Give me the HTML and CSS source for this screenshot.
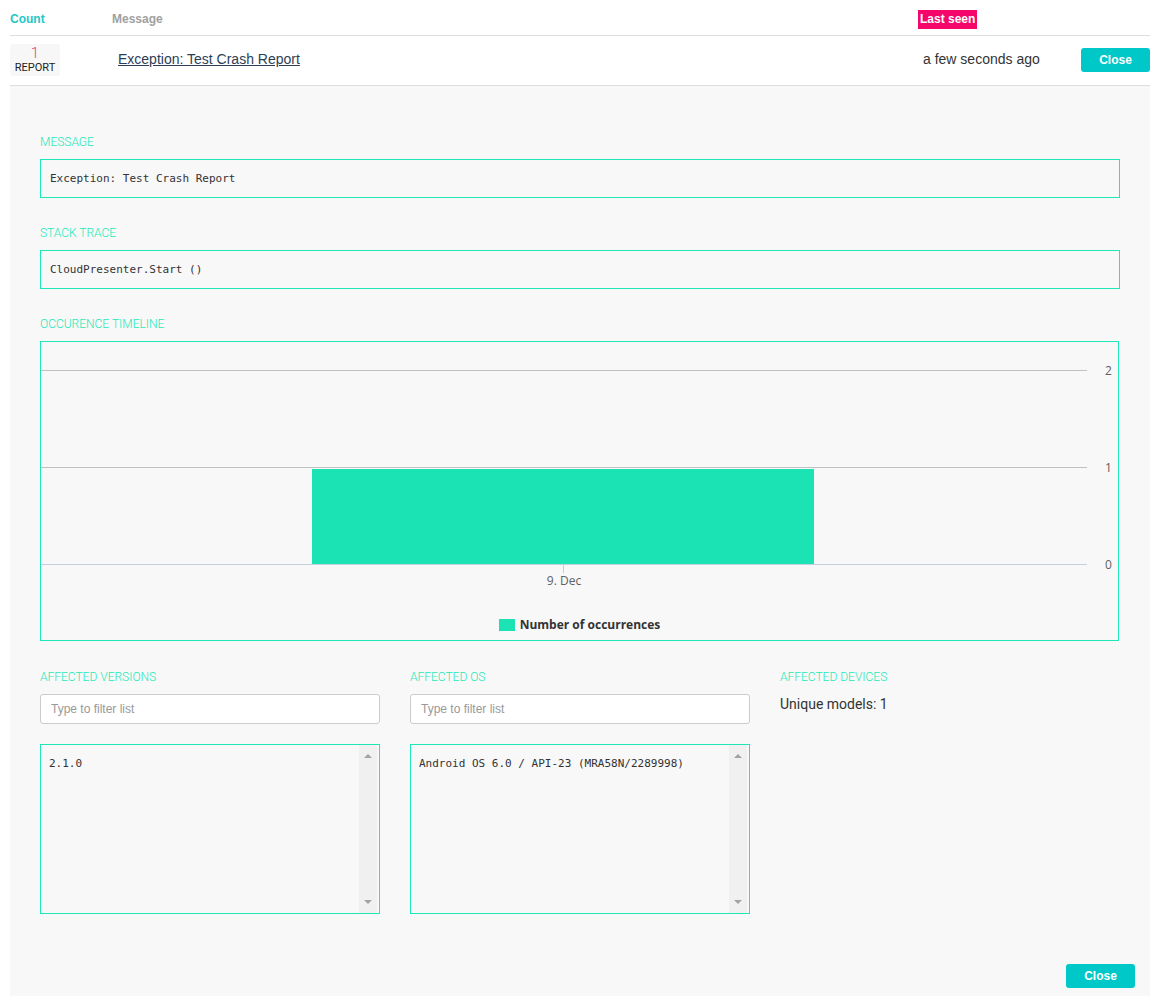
FILE: index.html
```html
<!DOCTYPE html>
<html>
<head>
<meta charset="utf-8">
<link rel="stylesheet" href="styles.css">
</head>
<body>
<div class="page">
  <div class="table-head">
    <div class="col-count hcount">Count</div>
    <div class="col-msg hmsg">Message</div>
    <div class="col-seen"><span class="hseen">Last seen</span></div>
    <div class="col-act"></div>
  </div>
  <div class="table-row">
    <div class="col-count">
      <div class="count-box"><span class="count-num">1</span><span class="count-lbl">REPORT</span></div>
    </div>
    <div class="col-msg"><a class="msg-link" href="#">Exception: Test Crash Report</a></div>
    <div class="col-seen seen-text">a few seconds ago</div>
    <div class="col-act"><button class="btn">Close</button></div>
  </div>
  <div class="detail">
    <div class="section">
      <div class="label">MESSAGE</div>
      <div class="codebox">Exception: Test Crash Report</div>
    </div>
    <div class="section">
      <div class="label">STACK TRACE</div>
      <div class="codebox">CloudPresenter.Start ()</div>
    </div>
    <div class="section">
      <div class="label">OCCURENCE TIMELINE</div>
      <div class="chart">
        <div class="plot">
          <div class="grid g2"><span class="ylab">2</span></div>
          <div class="grid g1"><span class="ylab">1</span></div>
          <div class="grid g0"><span class="ylab">0</span></div>
          <div class="bar"></div>
          <div class="tick"></div>
          <div class="xlab">9. Dec</div>
        </div>
        <div class="legend"><span class="legend-sw"></span><span class="legend-txt">Number of occurrences</span></div>
      </div>
    </div>
    <div class="cols">
      <div class="col">
        <div class="label">AFFECTED VERSIONS</div>
        <input class="filter" type="text" placeholder="Type to filter list">
        <div class="listbox">
          <div class="list-items">2.1.0</div>
          <div class="scrollbar"><span class="arr up"></span><span class="arr down"></span></div>
        </div>
      </div>
      <div class="col">
        <div class="label">AFFECTED OS</div>
        <input class="filter" type="text" placeholder="Type to filter list">
        <div class="listbox">
          <div class="list-items">Android OS 6.0 / API-23 (MRA58N/2289998)</div>
          <div class="scrollbar"><span class="arr up"></span><span class="arr down"></span></div>
        </div>
      </div>
      <div class="col">
        <div class="label">AFFECTED DEVICES</div>
        <div class="unique">Unique models: 1</div>
      </div>
    </div>
    <div class="footer"><button class="btn">Close</button></div>
  </div>
</div>
</body>
</html>
```
FILE: styles.css
```css
html, body { margin: 0; padding: 0; background: #fff; }
body { font-family: "Liberation Sans", Arial, sans-serif; color: #333; }
.page { padding: 0 4px 0 10px; }

.table-head {
  display: flex; align-items: center;
  height: 36px; padding-top: 3px; box-sizing: border-box;
  border-bottom: 1px solid #dedede;
  font-size: 12px; font-weight: bold;
}
.col-count { width: 102px; }
.col-msg { flex: 1; }
.col-seen { width: 163px; }
.col-act { width: 69px; display: flex; justify-content: flex-end; }
.hcount { color: #1ec8c8; }
.hmsg { color: #a0a0a0; }
.hseen { background: #f5066a; color: #fff; padding: 2px 2px 3px; }

.table-row {
  display: flex; align-items: center;
  height: 49px; border-bottom: 1px solid #dedede;
}
.count-box {
  width: 50px; height: 32px; background: #f7f7f7; border-radius: 3px;
  display: flex; flex-direction: column; align-items: center; justify-content: center;
  font-family: Roboto, "Liberation Sans", sans-serif;
  position: relative; top: -1px;
}
.count-num { display: block; color: #f2386a; font-size: 15px; font-weight: 300; line-height: 16px; height: 16px; }
.count-lbl { display: block; font-size: 11px; color: #222; line-height: 13px; height: 13px; }
.msg-link { color: #2c3e55; font-size: 14px; margin-left: 6px; text-decoration: underline; position: relative; top: -2px; }
.seen-text { font-size: 14px; color: #333; padding-left: 5px; box-sizing: border-box; position: relative; top: -2px; }
.btn {
  background: #00c8c8; color: #fff; border: 0; border-radius: 3px;
  width: 69px; height: 24px; font: bold 12px "Liberation Sans", Arial, sans-serif;
  padding: 0;
}
.table-row .btn { position: relative; top: -1px; }

.detail {
  background: #f8f8f8; padding: 49px 30px 12px 30px;
}
.section { margin-bottom: 28px; }
.label {
  font-family: Roboto, "Liberation Sans", sans-serif;
  font-size: 12px; font-weight: 300; color: #1de9b6; margin-bottom: 10px; line-height: 14px;
}
.codebox {
  border: 1px solid #1de9b6; height: 37px;
  display: flex; align-items: center; padding-left: 9px;
  font-family: "DejaVu Sans Mono", "Liberation Mono", monospace; font-size: 11px; color: #333;
}
.chart {
  border: 1px solid #1de9b6; height: 298px; width: 1077px; position: relative;
}
.plot { position: relative; height: 270px; }
.grid { position: absolute; left: 0; width: 1046px; height: 1px; background: #c0c0c0; }
.g2 { top: 28px; }
.g1 { top: 125px; }
.g0 { top: 222px; background: #c0d0e0; }
.ylab {
  position: absolute; left: 1064px; top: -8px; font: 12px "Open Sans", sans-serif; color: #606060;
}
.bar { position: absolute; left: 271px; top: 127px; width: 502px; height: 95px; background: #1ce3b3; }
.tick { position: absolute; left: 522px; top: 222px; width: 1px; height: 9px; background: #c0d0e0; }
.xlab { position: absolute; left: 490px; width: 66px; text-align: center; top: 230px; font: 12px "Open Sans", sans-serif; color: #606060; }
.legend { display: flex; align-items: center; justify-content: center; gap: 5px; padding-top: 4px; }
.legend-sw { width: 16px; height: 12px; background: #1ce3b3; }
.legend-txt { font: bold 12px "Open Sans", sans-serif; color: #333; }

.cols { display: flex; gap: 30px; margin-top: 29px; }
.col { width: 340px; }
.filter {
  display: block; box-sizing: border-box; width: 340px; height: 30px;
  border: 1px solid #ccc; border-radius: 3px; background: #fff;
  padding: 0 10px; font: 12px "Liberation Sans", Arial, sans-serif; color: #333;
  margin-top: 8px;
}
.filter::placeholder { color: #999; }
.listbox {
  margin-top: 20px; border: 1px solid #1de9b6; height: 168px; display: flex;
}
.list-items {
  flex: 1; padding: 12px 8px; font-family: "DejaVu Sans Mono", "Liberation Mono", monospace; font-size: 11px; color: #333;
}
.scrollbar { width: 18px; background: #f0f0f0; margin-right: 2px; position: relative; }
.arr { position: absolute; left: 5px; width: 0; height: 0; border-left: 4px solid transparent; border-right: 4px solid transparent; }
.arr.up { top: 9px; border-bottom: 4px solid #a3a3a3; }
.arr.down { bottom: 9px; border-top: 4px solid #a3a3a3; }
.unique { font-family: Roboto, "Liberation Sans", sans-serif; font-size: 14px; color: #333; margin-top: 12px; }

.footer { display: flex; justify-content: flex-end; margin-top: 50px; margin-right: -15px; }
```
